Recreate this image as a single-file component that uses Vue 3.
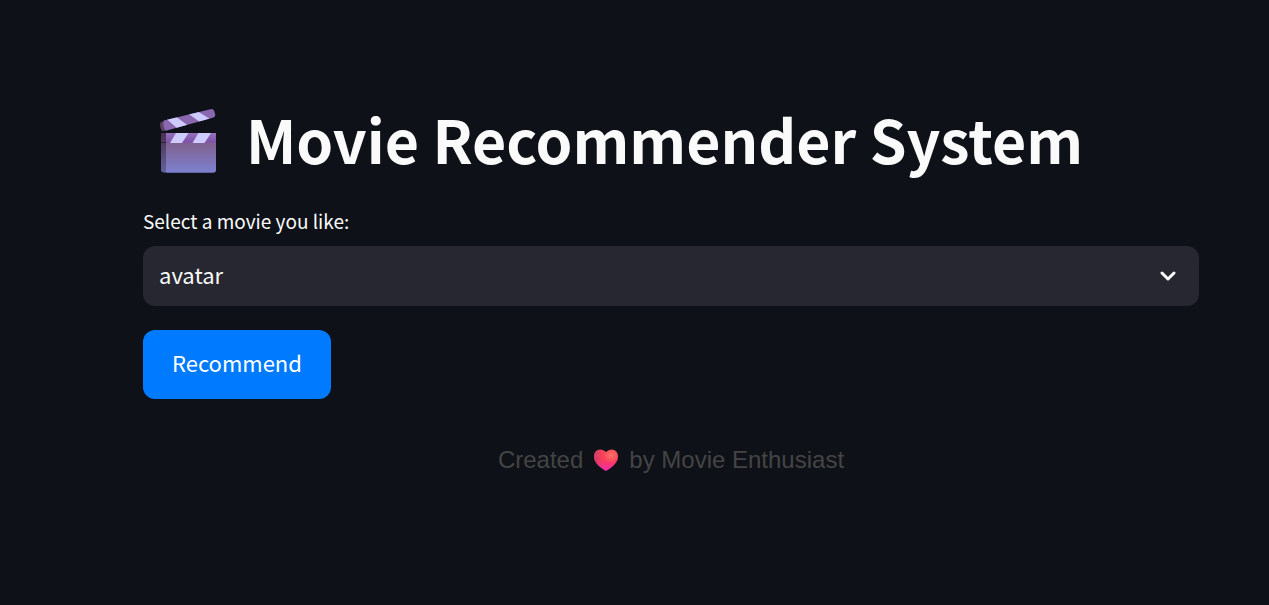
<script setup>
import { ref } from 'vue'

const movies = ['avatar', 'inception', 'interstellar', 'titanic']
const selected = ref('avatar')
</script>

<template>
  <main class="page">
    <h1 class="title">
      <svg class="clapper" viewBox="0 0 60 68" aria-hidden="true">
        <defs>
          <linearGradient id="board" x1="0" y1="0" x2="0" y2="1">
            <stop offset="0" stop-color="#80628f" />
            <stop offset="1" stop-color="#7d80d0" />
          </linearGradient>
          <linearGradient id="side" x1="0" y1="0" x2="0" y2="1">
            <stop offset="0" stop-color="#4a3150" />
            <stop offset="1" stop-color="#62619c" />
          </linearGradient>
          <linearGradient id="bar" x1="0" y1="0" x2="0" y2="1">
            <stop offset="0" stop-color="#9572bd" />
            <stop offset="1" stop-color="#7d50a5" />
          </linearGradient>
          <clipPath id="armClip">
            <path d="M6 12.600 52.500 1.200Q55.500.6 56.200 3L57.200 6.500Q57.500 8.800 55.500 9.500L8 22.800Q4 18 6 12.600Z" />
          </clipPath>
          <clipPath id="barClip"><path d="M8 25H58V35H8Z" /></clipPath>
        </defs>
        <path d="M2 16Q2 13.500 7 12.400L8 22.800 4 23Q2 20 2 16Z" fill="#5d4163" />
        <g clip-path="url(#armClip)">
          <path d="M0 0H60V25H0Z" fill="#8a68b0" />
          <path d="M8 10.500 17 8 30 17.500 19.500 20.500ZM28.500 4.500 37.500 2 52 11 42 14Z" fill="#cdcbff" />
        </g>
        <path d="M3 25H9V64.500H6Q3 64.500 3 61.500Z" fill="url(#side)" />
        <path d="M8 35H58V62Q58 64.800 55 64.800H9Q7 64 8 61Z" fill="url(#board)" />
        <g clip-path="url(#barClip)">
          <path d="M8 25H58V35H8Z" fill="url(#bar)" />
          <path d="M18 25H30.500L24 35H12ZM40.500 25H53L46.500 35H34.500Z" fill="#cdcbff" />
        </g>
        <path d="M3 34H8V35H3Z" fill="#302038" />
      </svg>
      <span class="title-text">Movie Recommender System</span>
    </h1>

    <label class="label" for="movie">Select a movie you like:</label>
    <div class="field">
      <select id="movie" v-model="selected" class="select">
        <option v-for="movie in movies" :key="movie" :value="movie">{{ movie }}</option>
      </select>
      <svg class="chevron" viewBox="0 0 16 10" aria-hidden="true">
        <path d="M2 2 8 8 14 2" />
      </svg>
    </div>

    <button class="button" type="button">Recommend</button>

    <footer class="footer">
      <span>Created</span>
      <svg class="heart" viewBox="0 0 26 24" role="img" aria-label="love">
        <defs>
          <linearGradient id="heartFill" x1="0" y1="0" x2="0" y2="1">
            <stop offset="0" stop-color="#f5475a" />
            <stop offset=".5" stop-color="#fb3c59" />
            <stop offset="1" stop-color="#f22bb0" />
          </linearGradient>
          <radialGradient id="heartGlow" cx=".72" cy=".28" r=".35">
            <stop offset="0" stop-color="#ff7167" />
            <stop offset="1" stop-color="#ff7167" stop-opacity="0" />
          </radialGradient>
          <linearGradient id="heartShade" x1="0" y1="0" x2="1" y2="0">
            <stop offset="0" stop-color="#b83a70" stop-opacity=".7" />
            <stop offset=".35" stop-color="#b83a70" stop-opacity="0" />
          </linearGradient>
        </defs>
        <path v-for="fill in ['heartFill', 'heartGlow', 'heartShade']" :key="fill" :fill="`url(#${fill})`"
          d="M13 4Q10.500 1.500 7.500 1.500C3.500 1.500 1 4.500 1 8.500C1 14.500 6 18.500 12 22.500Q13 23.200 14 22.500C20 18.500 25 14.500 25 8.500C25 4.500 22.500 1.500 18.500 1.500Q15.500 1.500 13 4Z" />
      </svg>
      <span>by Movie Enthusiast</span>
    </footer>
  </main>
</template>

<style>
html,
body {
  background: #0e1117;
}
</style>

<style scoped>
.page {
  box-sizing: border-box;
  display: flex;
  flex-direction: column;
  align-items: stretch;
  min-height: 100vh;
  padding: 96px 70px 48px 143px;
  background: #0e1117;
  color: #fafafa;
  font-family: "Source Sans Pro", "Noto Sans CJK SC", sans-serif;
}

.title {
  display: flex;
  align-items: center;
  gap: 28px;
  margin: 0;
  padding-left: 15px;
  font-size: 59px;
  font-weight: 700;
  line-height: 86px;
  white-space: nowrap;
}

.title-text {
  padding-bottom: 6px;
}

.clapper {
  flex: none;
  width: 60px;
  height: 68px;
}

.label {
  margin: 18px 0 10px;
  font-size: 19px;
  line-height: 30px;
}

.field {
  position: relative;
}

.select {
  display: block;
  box-sizing: border-box;
  width: 100%;
  height: 60px;
  margin: 0;
  padding: 0 48px 4px 16px;
  border: 0;
  border-radius: 12px;
  appearance: none;
  background: #262730;
  color: #fafafa;
  font-family: inherit;
  font-size: 22px;
}

.chevron {
  position: absolute;
  top: 25px;
  right: 23px;
  width: 16px;
  height: 10px;
  fill: none;
  stroke: #fafafa;
  stroke-width: 3;
  stroke-linecap: round;
  stroke-linejoin: round;
  pointer-events: none;
}

.button {
  align-self: flex-start;
  margin: 24px 0 0;
  padding: 14px 29px 18px;
  border: 0;
  border-radius: 12px;
  background: #007bff;
  color: #fff;
  font-family: inherit;
  font-size: 22px;
  line-height: 37px;
}

.footer {
  display: flex;
  justify-content: center;
  align-items: center;
  gap: 10px;
  margin-top: 43px;
  color: #444;
  font-family: "Liberation Sans", Arial, sans-serif;
  font-size: 24px;
  line-height: 36px;
}

.heart {
  width: 26px;
  height: 24px;
}
</style>
